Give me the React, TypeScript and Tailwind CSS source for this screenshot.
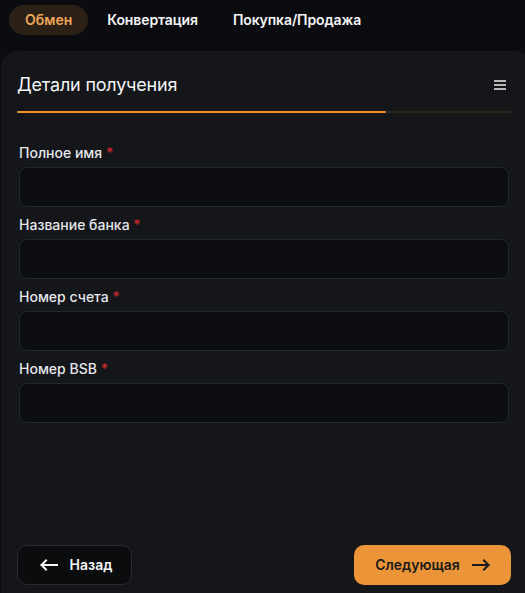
import React from 'react';

const ArrowLeft = () => (
  <svg width="18" height="12" viewBox="0 0 18 12" fill="none" stroke="currentColor" strokeWidth="2" strokeLinecap="square">
    <path d="M1.5 6h16M6 1.5 1.5 6 6 10.5" />
  </svg>
);

const ArrowRight = () => (
  <svg width="18" height="12" viewBox="0 0 18 12" fill="none" stroke="currentColor" strokeWidth="2" strokeLinecap="square">
    <path d="M0.5 6h16M12 1.5 16.5 6 12 10.5" />
  </svg>
);

const fields = ['Полное имя', 'Название банка', 'Номер счета', 'Номер BSB'];

const App = () => {
  return (
    <div
      className="h-[593px] w-[525px] overflow-hidden bg-[#0b0c0f] flex flex-col"
      style={{ fontFamily: 'Inter, "Noto Sans", sans-serif' }}
    >
      {/* tabs */}
      <div className="flex gap-[3px] pl-[9px] pt-[5px]">
        <button className="h-[30px] px-4 rounded-full bg-[#2a2015] text-[#eda65a] text-sm font-semibold">
          Обмен
        </button>
        <button className="h-[30px] px-4 rounded-full text-[#f3f4f6] text-sm font-semibold tracking-[-0.1px]">
          Конвертация
        </button>
        <button className="h-[30px] px-4 rounded-full text-[#f3f4f6] text-sm font-semibold tracking-[-0.1px]">
          Покупка/Продажа
        </button>
      </div>

      {/* card */}
      <div className="mt-4 ml-px w-[530px] h-[560px] shrink-0 rounded-t-2xl bg-[#14161a] flex flex-col pl-4 pr-5 pt-5 pb-[26px]">
        <div className="flex items-center justify-between h-7">
          <h2 className="text-lg text-[#f3f4f6] tracking-[-0.2px]">Детали получения</h2>
          <div className="flex flex-col gap-[2px] w-3 mr-[5px]">
            <span className="h-[2px] bg-[#b9b9b9]" />
            <span className="h-[2px] bg-[#b9b9b9]" />
            <span className="h-[2px] bg-[#b9b9b9]" />
          </div>
        </div>

        <div className="mt-3 h-[2px] bg-[#2e251c] rounded-full">
          <div className="h-full w-[74.7%] bg-[#f0902f] rounded-full" />
        </div>

        <div className="mt-[30px] ml-[2px] mr-[2px] flex flex-col gap-2">
          {fields.map((label) => (
            <div key={label} className="flex flex-col gap-1">
              <label className="text-sm font-medium text-[#e5e7eb] leading-5">
                {label} <span className="text-[#c62a2a]">*</span>
              </label>
              <input
                className="h-10 w-full rounded-lg border border-[#1f2733] bg-[#0c0d10] px-3 text-sm text-white outline-none"
                type="text"
              />
            </div>
          ))}
        </div>

        <div className="mt-auto flex items-center justify-between">
          <button className="h-10 w-[115px] flex items-center justify-center gap-3 pl-[3px] rounded-[10px] border border-[#272a30] bg-[#0b0c0e] text-[#f3f4f6] text-sm font-semibold">
            <ArrowLeft />
            Назад
          </button>
          <button className="h-10 w-[157px] flex items-center justify-center gap-3 rounded-[10px] bg-[#ec9538] text-[#1a1a1a] text-sm font-semibold">
            Следующая
            <ArrowRight />
          </button>
        </div>
      </div>
    </div>
  );
};

export default App;
